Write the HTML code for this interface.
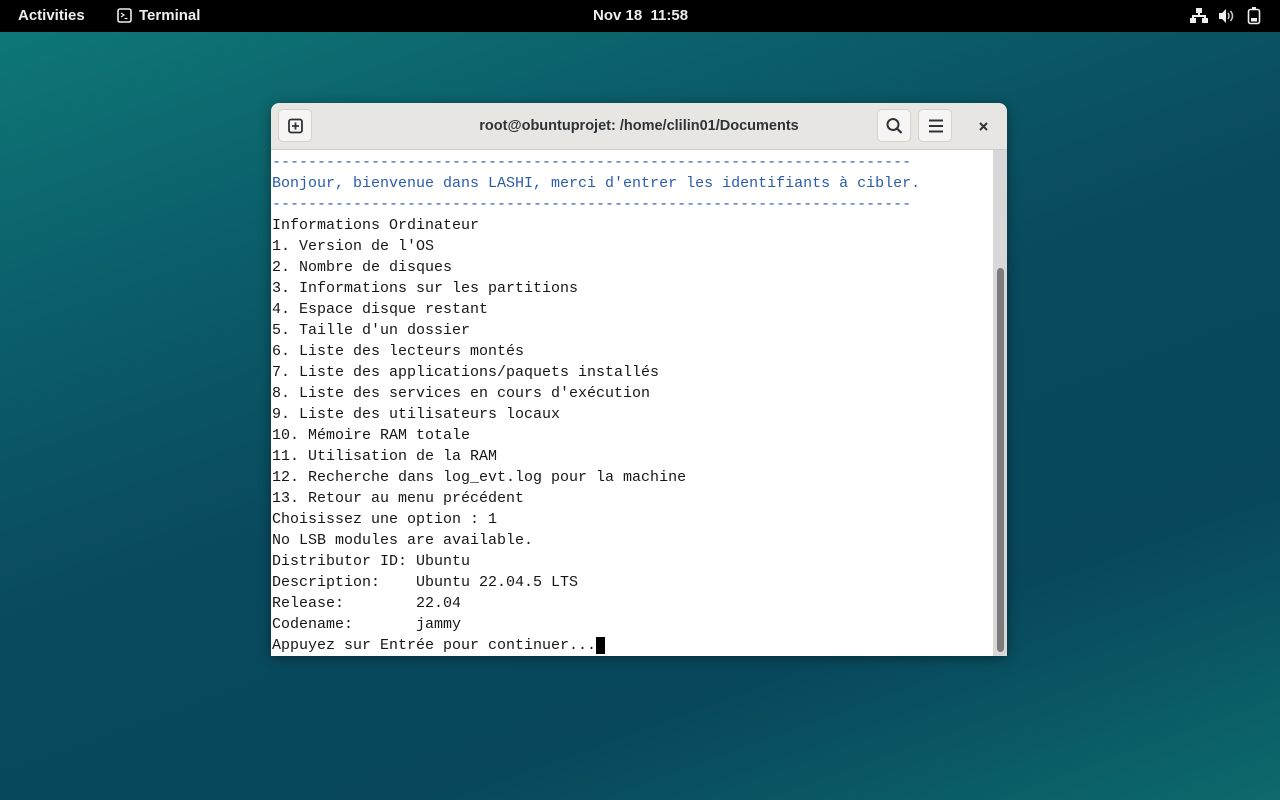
<!DOCTYPE html>
<html><head><meta charset="utf-8"><style>
*{margin:0;padding:0;box-sizing:border-box}
body{width:1280px;height:800px;overflow:hidden;position:relative;font-family:"Liberation Sans",sans-serif;
background:linear-gradient(160deg,#0f7a78 0%,#0b5f6a 25%,#094a5e 50%,#08475c 75%,#0c6a6c 100%);}
.bar{position:absolute;top:0;left:0;width:1280px;height:32px;background:#000;color:#eee;font-size:15px;font-weight:bold}
.bar span{position:absolute;top:7px}
.win{position:absolute;left:271px;top:103px;width:736px;height:553px;border-radius:8px 8px 0 0;overflow:hidden;box-shadow:0 2px 12px rgba(0,0,0,.4)}
.hdr{height:47px;background:#e8e6e3;border-bottom:1px solid #cfcdca;position:relative}
.btn{position:absolute;top:6px;width:34px;height:33px;background:#f6f5f4;border-radius:5px;border:1px solid #d6d3cf}
.title{position:absolute;left:0;right:0;top:15px;text-align:center;font-size:14.5px;font-weight:bold;color:#2e3436}
.term{position:absolute;top:47px;left:0;width:736px;height:506px;background:#fff;font-family:"Liberation Mono",monospace;font-size:15px;line-height:21px;color:#171717;padding-left:1px;padding-top:2px;white-space:pre}
.b{color:#2a5ca8}
.sb{position:absolute;right:0;top:47px;width:14px;height:506px;background:#d8d8d8}
.th{position:absolute;right:3px;top:118px;width:7px;height:384px;background:#7b7b7b;border-radius:4px}
</style></head><body>
<div class="bar">
<span style="left:18px">Activities</span>
<svg style="position:absolute;left:117px;top:8px" width="16" height="16"><rect x="1" y="1" width="13" height="13" rx="2" fill="none" stroke="#eee" stroke-width="1.6"/><path d="M4 5l3 2-3 2M7.5 10.5h3" stroke="#eee" stroke-width="1.2" fill="none"/></svg>
<span style="left:139px">Terminal</span>
<span style="left:593px">Nov 18&nbsp; 11:58</span>
<svg style="position:absolute;left:1190px;top:7px" width="18" height="18" fill="#eee"><rect x="6" y="1" width="6" height="5"/><rect x="8" y="6" width="2" height="3"/><rect x="2" y="8" width="14" height="2"/><rect x="2" y="8" width="2" height="4"/><rect x="14" y="8" width="2" height="4"/><rect x="0" y="11" width="6" height="5"/><rect x="12" y="11" width="6" height="5"/></svg>
<svg style="position:absolute;left:1217px;top:7px" width="18" height="18"><path d="M2 6h3l4-4v14l-4-4H2z" fill="#eee"/><path d="M11 6q2 3 0 6M13.5 4q4 5 0 10" stroke="#ccc" stroke-width="1.5" fill="none"/></svg>
<svg style="position:absolute;left:1247px;top:6px" width="14" height="20"><rect x="5" y="1" width="4" height="2" fill="#eee"/><rect x="1.5" y="3.5" width="11" height="14" rx="2" fill="none" stroke="#eee" stroke-width="1.6"/><rect x="4" y="12" width="6" height="3.5" fill="#eee"/></svg>
</div>
<div class="win">
<div class="hdr">
<div class="btn" style="left:7px"><svg width="34" height="33"><rect x="10" y="9.5" width="13" height="13" rx="2" fill="none" stroke="#2e3436" stroke-width="1.8"/><path d="M16.5 12.5v7M13 16h7" stroke="#2e3436" stroke-width="1.8"/></svg></div>
<div class="title">root@obuntuprojet: /home/clilin01/Documents</div>
<div class="btn" style="left:606px"><svg width="34" height="33"><circle cx="15" cy="14.5" r="5.5" fill="none" stroke="#2e3436" stroke-width="2"/><path d="M19 18.5l4.5 4.5" stroke="#2e3436" stroke-width="2.2"/></svg></div>
<div class="btn" style="left:647px"><svg width="34" height="33"><path d="M10 10.5h14M10 16h14M10 21.5h14" stroke="#2e3436" stroke-width="2"/></svg></div>
<svg style="position:absolute;left:707px;top:18px" width="12" height="12"><path d="M2 2l7 7M9 2l-7 7" stroke="#2e3436" stroke-width="2"/></svg>
</div>
<div class="term"><span class="b">-----------------------------------------------------------------------
Bonjour, bienvenue dans LASHI, merci d'entrer les identifiants à cibler.
-----------------------------------------------------------------------</span>
Informations Ordinateur
1. Version de l'OS
2. Nombre de disques
3. Informations sur les partitions
4. Espace disque restant
5. Taille d'un dossier
6. Liste des lecteurs montés
7. Liste des applications/paquets installés
8. Liste des services en cours d'exécution
9. Liste des utilisateurs locaux
10. Mémoire RAM totale
11. Utilisation de la RAM
12. Recherche dans log_evt.log pour la machine
13. Retour au menu précédent
Choisissez une option : 1
No LSB modules are available.
Distributor ID:	Ubuntu
Description:	Ubuntu 22.04.5 LTS
Release:	22.04
Codename:	jammy
Appuyez sur Entrée pour continuer...<span style="background:#000;color:#000">_</span></div>
<div class="sb"><div class="th"></div></div>
</div>
</body></html>
